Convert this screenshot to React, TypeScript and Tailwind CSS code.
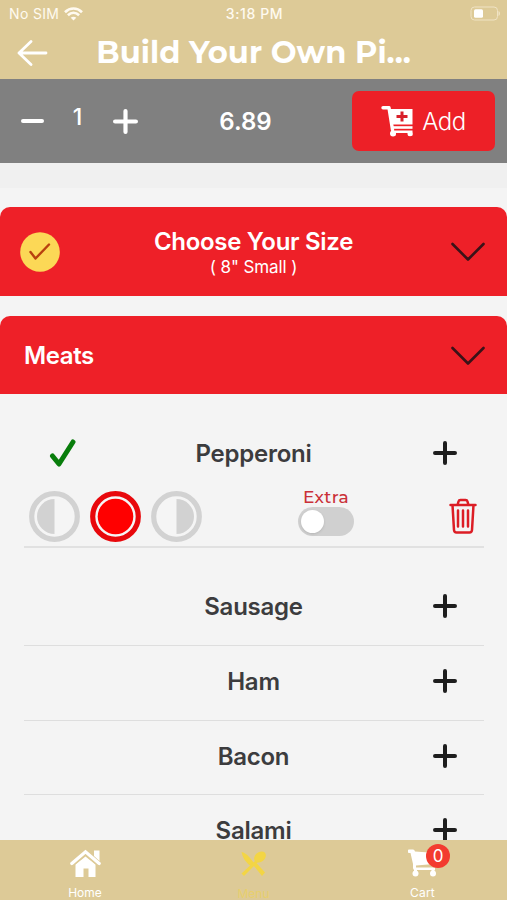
import { useState } from 'react'

const TOPPINGS = ['Sausage', 'Ham', 'Bacon', 'Salami']

const MONTSERRAT = "font-['Montserrat','Open_Sans',sans-serif]"

type Portion = 'left' | 'whole' | 'right'

function Plus({ className }: { className: string }) {
  return (
    <svg className={className} viewBox="0 0 24 24" fill="none" stroke="currentColor" strokeWidth="4" strokeLinecap="round">
      <path d="M2 12h20M12 2v20" />
    </svg>
  )
}

function Chevron() {
  return (
    <svg className="h-5 w-[34px]" viewBox="0 0 34 20" fill="none" stroke="#3a1218" strokeWidth="2.6" strokeLinecap="round" strokeLinejoin="round">
      <path d="M1.5 2 17 17.5 32.5 2" />
    </svg>
  )
}

function StatusBar() {
  return (
    <div className="grid h-[27px] grid-cols-3 items-center pr-[7px] pl-[9px] text-[14px] text-[#fffaf0]">
      <div className="flex items-center gap-[5px]">
        <span className="tracking-[0.35px]">No SIM</span>
        <svg className="h-[14px] w-[19px]" viewBox="0 0 19 14" fill="none" stroke="currentColor" strokeWidth="2.6">
          <path d="M1 5.2C6 .3 13 .3 18 5.2" />
          <path d="M3.9 8.2c3.3-3.1 7.9-3.1 11.2 0" />
          <path d="M9.5 13.5 6.7 10.8c1.6-1.5 4-1.5 5.6 0z" fill="currentColor" stroke="none" />
        </svg>
      </div>
      <span className="text-center font-medium tracking-[0.6px]">3:18 PM</span>
      <svg className="h-[15px] w-[31px] justify-self-end" viewBox="0 0 31 15">
        <rect x="2" y="1" width="26.5" height="13" rx="3.5" fill="none" stroke="#f0e3c4" />
        <rect x="5" y="3.3" width="9" height="8.5" rx="1.5" fill="#fff" />
        <path d="M29.5 5v5c2-.8 2-4.2 0-5z" fill="#f0e3c4" />
      </svg>
    </div>
  )
}

function PortionButton({ portion, active, onClick }: { portion: Portion; active: boolean; onClick: () => void }) {
  return (
    <button type="button" onClick={onClick} className="cursor-pointer" aria-label={portion}>
      <svg className={active ? 'h-[51px] w-[51px] text-[#e8080c]' : 'h-[51px] w-[51px] text-[#d2d2d2]'} viewBox="0 0 51 51">
        <circle cx="25.5" cy="25.5" r="22.8" fill="#f5f5f5" stroke="currentColor" strokeWidth="5.2" />
        {portion === 'whole' && <circle cx="25.5" cy="25.5" r="17.8" fill={active ? '#f00' : '#d2d2d2'} />}
        {portion === 'left' && <path d="M25.5 8v35a17.5 17.5 0 0 1 0-35z" fill="currentColor" />}
        {portion === 'right' && <path d="M25.5 8v35a17.5 17.5 0 0 0 0-35z" fill="currentColor" />}
      </svg>
    </button>
  )
}

function ToppingRow({ name, selected }: { name: string; selected?: boolean }) {
  return (
    <div className="grid h-[30px] grid-cols-[77px_1fr_78px] items-center">
      <div className="flex justify-center">
        {selected && (
          <svg className="h-7 w-7" viewBox="0 0 28 28" fill="none" stroke="#087d0b" strokeWidth="5" strokeLinecap="round" strokeLinejoin="round">
            <path d="m3.5 17 6.5 8L24 3" />
          </svg>
        )}
      </div>
      <span className="-mb-px pt-px text-center text-[24px] leading-[30px] font-semibold tracking-[-0.25px] text-[#3c3c3e]">{name}</span>
      <button type="button" className="flex cursor-pointer justify-center">
        <Plus className="h-6 w-6 text-[#1e1e1e]" />
      </button>
    </div>
  )
}

export default function App() {
  const [qty, setQty] = useState(1)
  const [portion, setPortion] = useState<Portion>('whole')
  const [extra, setExtra] = useState(false)

  return (
    <div className="flex h-[900px] w-[507px] flex-col overflow-hidden bg-[#f4f4f4] font-['Inter',sans-serif]">
      <header className="h-[79px] shrink-0 bg-[#ddca97] text-white">
        <StatusBar />
        <div className="grid h-[51px] grid-cols-[64px_1fr_64px] items-center">
          <button type="button" className="flex cursor-pointer pl-[17px]" aria-label="Back">
            <svg className="h-[26px] w-[31px]" viewBox="0 0 31 26" fill="none" stroke="currentColor" strokeWidth="2.8" strokeLinecap="round" strokeLinejoin="round">
              <path d="M29 13H2M14 1.5 2 13l12 11.5" />
            </svg>
          </button>
          <h1 className={`${MONTSERRAT} pt-px text-center text-[30.6px] font-bold whitespace-nowrap`}>Build Your Own Pi...</h1>
        </div>
      </header>

      <div className="flex h-[84px] shrink-0 items-center bg-[#808080] pr-3 pl-5 text-white">
        <div className="flex w-[118px] items-center justify-between">
          <button type="button" onClick={() => setQty(Math.max(1, qty - 1))} className="cursor-pointer" aria-label="Less">
            <svg className="h-6 w-[25px]" viewBox="0 0 25 24" stroke="currentColor" strokeWidth="4" strokeLinecap="round">
              <path d="M3 12h19" />
            </svg>
          </button>
          <span className="pr-[3px] pb-2 text-[23px] font-medium">{qty}</span>
          <button type="button" onClick={() => setQty(qty + 1)} className="cursor-pointer" aria-label="More">
            <Plus className="h-[25px] w-[25px]" />
          </button>
        </div>
        <span className="flex-1 pt-[2px] pl-px text-center text-[24px] font-semibold">6.89</span>
        <button type="button" className="flex h-[60px] w-[143px] cursor-pointer items-center justify-center gap-[9px] rounded-[7px] bg-[#ed2027]">
          <svg className="h-8 w-8" viewBox="0 0 32 32" fill="none" stroke="#fff">
            <path d="M2 2.7h6l3.5 22" strokeWidth="3.4" strokeLinecap="round" strokeLinejoin="round" />
            <path d="M8 4h23.5v15.5H10z" fill="#fff" stroke="none" />
            <path d="M10 22.5h21.5" strokeWidth="2.6" />
            <path d="M10.5 25.5h21v5H27.5V28h-13v2.5h-4z" fill="#fff" stroke="none" />
            <circle cx="12" cy="28.5" r="3" fill="#fff" stroke="none" />
            <circle cx="29" cy="28.8" r="2.5" fill="#fff" stroke="none" />
            <path d="M15.5 11.5h11M21 6.5v10" stroke="#d8202a" strokeWidth="3" />
          </svg>
          <span className="pt-[2px] text-[24px] font-light tracking-[-0.5px]">Add</span>
        </button>
      </div>
      <div className="h-[25px] shrink-0 bg-[#f0f0f0]" />

      <main className="flex min-h-0 flex-1 flex-col overflow-hidden pt-[19px]">
        <section className="flex h-[89px] shrink-0 items-center justify-between rounded-t-[10px] bg-[#ee2028] pr-[22px] pl-5 text-white">
          <svg className="h-10 w-10" viewBox="0 0 40 40" fill="none">
            <circle cx="20" cy="20" r="19.8" fill="#fcd856" />
            <path d="M10.5 20 15.5 26.5 29 12.5" stroke="#b8410f" strokeWidth="2.4" strokeLinecap="round" strokeLinejoin="round" />
          </svg>
          <div className="pt-[3px] pr-1 text-center">
            <h2 className="text-[24px] leading-[28px] font-semibold tracking-[-0.3px]">Choose Your Size</h2>
            <p className="text-[17px] leading-[22px] tracking-[-0.1px]">( 8" Small )</p>
          </div>
          <Chevron />
        </section>

        <section className="mt-5 flex h-[78px] shrink-0 items-center justify-between rounded-t-[10px] bg-[#ee2028] pt-px pr-[22px] pl-6 text-white">
          <h2 className="text-[24px] font-semibold tracking-[-0.4px]">Meats</h2>
          <Chevron />
        </section>

        <div className="shrink-0 pr-[23px] pl-6">
          <div className="h-[154px] border-b-2 border-[#e1e1e1] pt-11">
            <ToppingRow name="Pepperoni" selected />
            <div className="mt-[23px] flex items-start pl-[5px]">
              <div className="flex gap-[10px]">
                {(['left', 'whole', 'right'] as Portion[]).map((p) => (
                  <PortionButton key={p} portion={p} active={p === portion} onClick={() => setPortion(p)} />
                ))}
              </div>
              <label className="-mt-[3px] ml-24 flex cursor-pointer flex-col items-center">
                <span className={`${MONTSERRAT} text-[17px] leading-[19px] font-medium tracking-[0.4px] text-[#ca3038]`}>Extra</span>
                <input type="checkbox" className="hidden" checked={extra} onChange={(e) => setExtra(e.target.checked)} />
                <span className={`flex h-[29px] w-14 items-center rounded-full bg-[#d0d0d0] px-[3px] ${extra ? 'justify-end' : 'justify-start'}`}>
                  <span className="h-[23px] w-[23px] rounded-full bg-white shadow" />
                </span>
              </label>
              <button type="button" className="mt-[7px] ml-[95px] cursor-pointer" aria-label="Remove">
                <svg className="h-9 w-7" viewBox="0 0 28 36" fill="none" stroke="#dc1d25" strokeWidth="2.5" strokeLinecap="round" strokeLinejoin="round">
                  <path d="M1.5 7h25M3.5 7l1.5 25q.2 2.5 2.5 2.5h13q2.3 0 2.5-2.5L24.5 7M8.5 7l1-3.5q.4-1.5 2-1.5h5q1.6 0 2 1.5l1 3.5" />
                  <path d="M9 12.5v16M14 12.5v16M19 12.5v16" />
                </svg>
              </button>
            </div>
          </div>
          {TOPPINGS.map((name, i) => (
            <div key={name} className={`border-b border-[#dedede] ${i === 0 ? 'h-[98px] pt-[43px]' : 'h-[74.5px] pt-5'}`}>
              <ToppingRow name={name} />
            </div>
          ))}
        </div>
      </main>

      <nav className="grid h-[60px] shrink-0 grid-cols-3 bg-[#ddca97] text-[12px] leading-[14px] text-white">
        <div className="flex flex-col items-center pt-[9px] pl-px">
          <svg className="h-[28px] w-[31px]" viewBox="0 0 31 28" fill="#fff">
            <path d="M5.5 15.5 15.5 7.5l10 8V28h-7v-8.5h-5V28h-8z" />
            <path d="M1.8 14.5 15.5 2.8l13.7 11.7" fill="none" stroke="#fff" strokeWidth="3.2" strokeLinecap="round" />
            <path d="M24 1.5h5.5V12L24 7z" />
            <path d="M4.5 15.6 15.5 6.4l11 9.2" fill="none" stroke="#ddca97" strokeWidth="1" />
          </svg>
          <span className="mt-[9px]">Home</span>
        </div>
        <div className="flex flex-col items-center pt-[11px] text-[#f3d544]">
          <svg className="h-[27px] w-[27px]" viewBox="0 0 27 27" fill="currentColor">
            <path d="M1.5 1Q6 1 14 12l-2.5 3.5Q3 10 1.5 1z" />
            <path d="m1.5 22.5 15-14 2 2L4 25z" />
            <ellipse cx="20" cy="6" rx="6.5" ry="4.8" transform="rotate(-40 20 6)" />
            <path d="m13.5 14.5 3-2.5L25 21.5 22 25z" />
          </svg>
          <span className="mt-[9px] opacity-50">Menu</span>
        </div>
        <div className="flex flex-col items-center pt-[9px]">
          <div className="relative">
            <svg className="h-[28px] w-[30px]" viewBox="0 0 30 28" fill="#fff">
              <path d="M.5.5H5q1.5 0 2 2l21 1.5-2 11L8 16.5v2H27V21H7q-2 0-2-2V15L2.5 4H.5q-1.500-1.700 0-3.500z" />
              <circle cx="7.5" cy="24.5" r="3" />
              <circle cx="25" cy="24.5" r="3" />
              <path d="M6 20h3v4H6zM23.5 20h3v4h-3z" />
            </svg>
            <span className="absolute -top-[5px] left-[18.5px] flex h-6 w-6 items-center justify-center rounded-full bg-[#f33b2f] text-[17px]">0</span>
          </div>
          <span className="mt-[9px] tracking-[0.2px]">Cart</span>
        </div>
      </nav>
    </div>
  )
}
